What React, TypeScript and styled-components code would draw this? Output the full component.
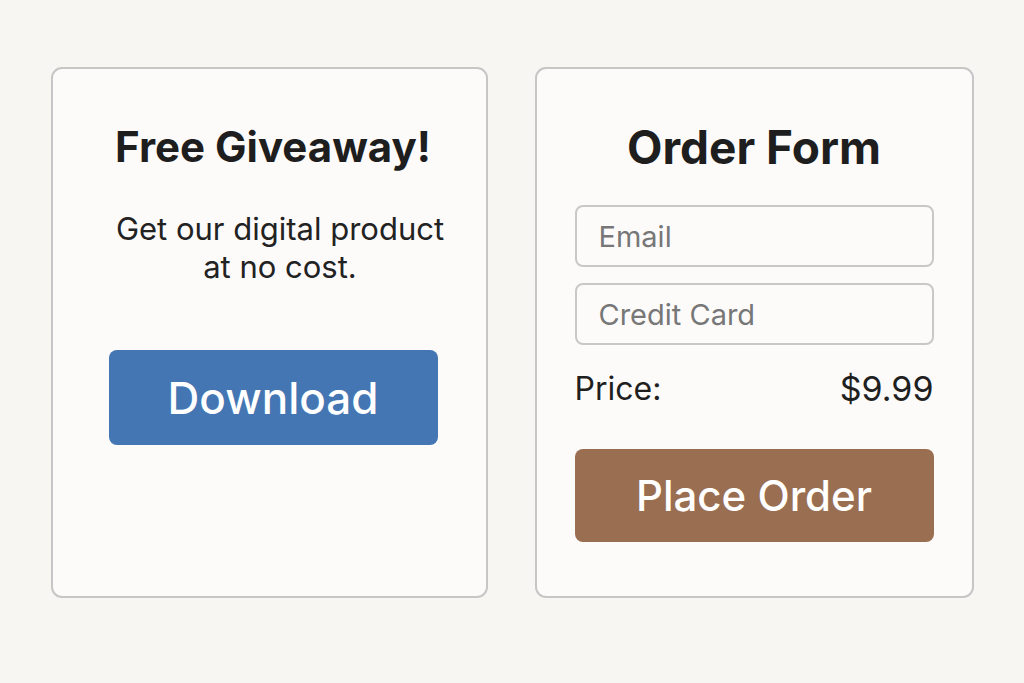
import styled, { createGlobalStyle } from "styled-components"

const GlobalStyle = createGlobalStyle`
  html, body {
    margin: 0;
    padding: 0;
    background: #f8f6f3;
    font-family: Inter, "Noto Sans", sans-serif;
  }
`

const Page = styled.div`
  display: flex;
  justify-content: center;
  align-items: flex-start;
  gap: 47px;
  padding-top: 67px;
  height: 683px;
  box-sizing: border-box;
`

const Card = styled.div<{ $width: number; $inset?: number }>`
  display: flex;
  flex-direction: column;
  align-items: center;
  box-sizing: border-box;
  width: ${(p) => p.$width}px;
  height: 531px;
  background: #fcfbfa;
  border: 2px solid #c6c6c6;
  border-radius: 11px;
  padding: 55px 38px 0 ${(p) => 38 + (p.$inset ?? 0)}px;
`

const Title = styled.h2<{ $size: number }>`
  margin: 0;
  font-size: ${(p) => p.$size}px;
  line-height: 46px;
  font-weight: 700;
  color: #1e1e1e;
  text-align: center;
`

const Blurb = styled.p`
  margin: 40px 0 0 14px;
  font-size: 31px;
  line-height: 38px;
  color: #222;
  text-align: center;
  white-space: nowrap;
`

const Button = styled.button<{ $bg: string; $height: number; $top: number; $size: number; $width?: number }>`
  display: flex;
  align-items: center;
  justify-content: center;
  width: ${(p) => (p.$width ? `${p.$width}px` : "100%")};
  height: ${(p) => p.$height}px;
  margin-top: ${(p) => p.$top}px;
  border: none;
  border-radius: 8px;
  background: ${(p) => p.$bg};
  color: #fff;
  font-family: Inter, "Noto Sans", sans-serif;
  font-size: ${(p) => p.$size}px;
  font-weight: 500;
`

const Form = styled.form`
  display: flex;
  flex-direction: column;
  width: 100%;
  margin-top: 35px;
`

const Field = styled.input`
  box-sizing: border-box;
  width: 100%;
  height: 62px;
  margin-bottom: 16px;
  padding: 0 22px;
  border: 2px solid #c8c8c8;
  border-radius: 8px;
  background: #fcfbfa;
  font-family: Inter, "Noto Sans", sans-serif;
  font-size: 29px;
  color: #333;
  &::placeholder {
    color: #777;
  }
`

const PriceRow = styled.div`
  display: flex;
  justify-content: space-between;
  align-items: center;
  margin-top: 8px;
  font-size: 32px;
  line-height: 40px;
  color: #1f1f1f;
`

const Amount = styled.span`
  font-size: 34px;
`

export default function App() {
  return (
    <>
      <GlobalStyle />
      <Page>
        <Card $width={437} $inset={8}>
          <Title $size={42}>Free Giveaway!</Title>
          <Blurb>
            Get our digital product
            <br />
            at no cost.
          </Blurb>
          <Button $bg="#4476b3" $height={95} $top={64} $size={44} $width={329}>
            Download
          </Button>
        </Card>
        <Card $width={439}>
          <Title $size={46}>Order Form</Title>
          <Form onSubmit={(e) => e.preventDefault()}>
            <Field type="email" placeholder="Email" />
            <Field type="text" placeholder="Credit Card" />
            <PriceRow>
              <span>Price:</span>
              <Amount>$9.99</Amount>
            </PriceRow>
            <Button $bg="#9a6e50" $height={93} $top={40} $size={42} type="submit">
              Place Order
            </Button>
          </Form>
        </Card>
      </Page>
    </>
  )
}
